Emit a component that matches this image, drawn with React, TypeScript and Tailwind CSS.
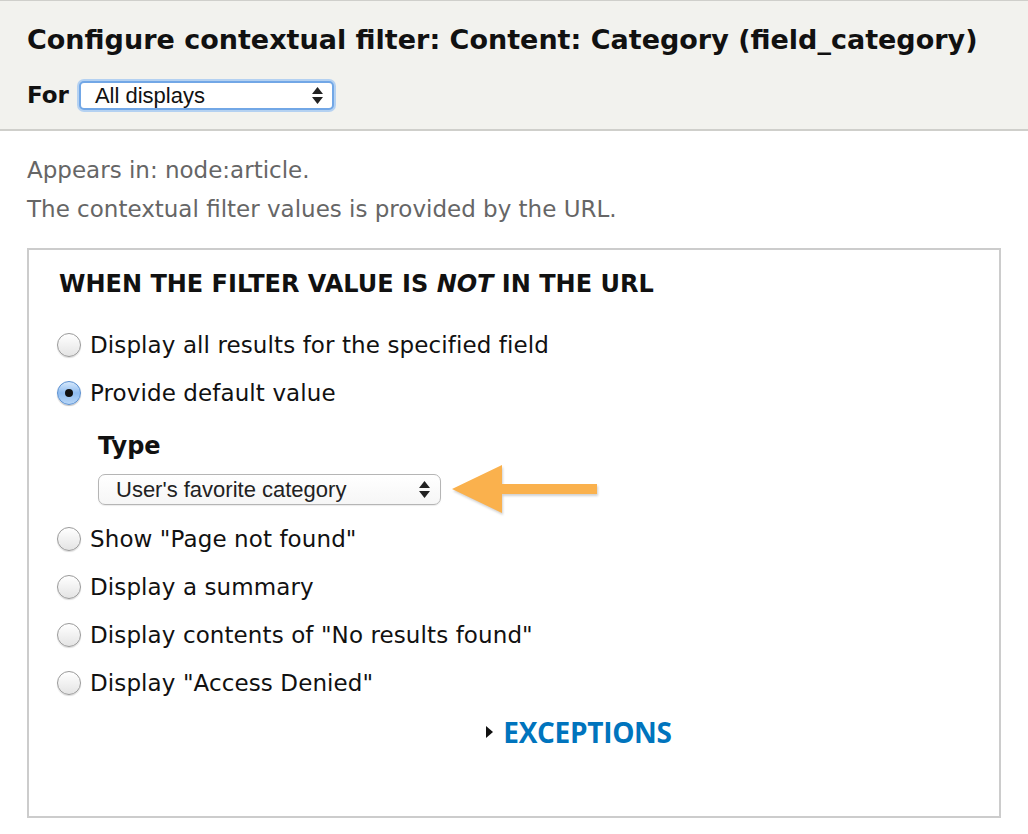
import React from "react";

const Radio = ({ checked = false }: { checked?: boolean }) => (
  <span
    className={
      checked
        ? "flex h-[24px] w-[24px] shrink-0 items-center justify-center rounded-full border border-[#5a8fd0] bg-gradient-to-b from-[#d6e8fb] via-[#8fbcf0] to-[#b7d6f7] shadow-[0_1px_1px_rgba(0,0,0,0.25)]"
        : "flex h-[24px] w-[24px] shrink-0 items-center justify-center rounded-full border border-[#9a9a9a] bg-gradient-to-b from-[#ffffff] to-[#e4e4e4] shadow-[0_1px_1px_rgba(0,0,0,0.15)]"
    }
  >
    {checked && <span className="h-[8px] w-[8px] rounded-full bg-[#111]" />}
  </span>
);

const UpDown = () => (
  <svg width="11" height="17" viewBox="0 0 11 17" className="shrink-0">
    <path d="M5.5 0 L11 7 L0 7 Z" fill="#222" />
    <path d="M0 10 L11 10 L5.5 17 Z" fill="#222" />
  </svg>
);

const options = [
  "Display all results for the specified field",
  "Provide default value",
  'Show "Page not found"',
  "Display a summary",
  'Display contents of "No results found"',
  'Display "Access Denied"',
];

export default function App() {
  return (
    <div
      className="min-h-[834px] w-[1028px] bg-white text-[#222]"
      style={{ fontFamily: '"DejaVu Sans", "Liberation Sans", sans-serif' }}
    >
      {/* Header */}
      <div className="border-t border-b-2 border-[#cfcfcb] bg-[#f2f2ee] px-[27px] pt-[22px] pb-[17px]">
        <h1 className="text-[27px] font-bold leading-[34px] text-[#111]">
          Configure contextual filter: Content: Category (field_category)
        </h1>
        <div className="mt-[22px] flex items-center gap-[8px]">
          <span className="text-[23px] font-bold leading-[33px] text-[#111]">For</span>
          <div className="rounded-[7px] bg-[#b4d1f1] p-[2px]">
            <div className="flex h-[29px] w-[255px] items-center justify-between rounded-[5px] border-2 border-[#72a7e6] bg-white pl-[14px] pr-[9px]">
              <span
                className="text-[22px] leading-[25px] text-[#111]"
                style={{ fontFamily: '"Liberation Sans", Arial, sans-serif' }}
              >
                All displays
              </span>
              <UpDown />
            </div>
          </div>
        </div>
      </div>

      {/* Description */}
      <div className="px-[27px] pt-[20px] text-[23px] leading-[39px] text-[#666]">
        <p>Appears in: node:article.</p>
        <p>The contextual filter values is provided by the URL.</p>
      </div>

      {/* Fieldset */}
      <div className="mx-[27px] mt-[19px] h-[570px] border-2 border-[#cccccc] px-[30px] pt-[19px]">
        <h2 className="text-[24px] font-bold leading-[30px] text-[#111]">
          WHEN THE FILTER VALUE IS <em>NOT</em> IN THE URL
        </h2>

        <div className="mt-[22px] flex flex-col">
          {options.map((label, i) => (
            <React.Fragment key={label}>
              <div className="-ml-[2px] flex h-[48px] items-center gap-[9px]">
                <Radio checked={i === 1} />
                <span className="text-[23px] tracking-[0.1px] text-[#111]">{label}</span>
              </div>
              {i === 1 && (
                <div className="pl-[39px] pt-[11px] pb-[10px]">
                  <div className="text-[24px] font-bold leading-[36px] text-[#111]">Type</div>
                  <div className="mt-[10px] flex h-[31px] items-center gap-[11px]">
                    <div className="flex h-[31px] w-[343px] shrink-0 items-center justify-between rounded-[7px] border border-[#b5b5b5] bg-gradient-to-b from-white to-[#f6f6f6] pl-[17px] pr-[10px] shadow-[0_1px_1px_rgba(0,0,0,0.08)]">
                      <span
                        className="text-[22px] leading-[25px] text-[#222]"
                        style={{ fontFamily: '"Liberation Sans", Arial, sans-serif' }}
                      >
                        User's favorite category
                      </span>
                      <UpDown />
                    </div>
                    {/* annotation arrow */}
                    <svg
                      width="146"
                      height="52"
                      viewBox="0 0 146 52"
                      className="shrink-0 drop-shadow-[1px_2px_1px_rgba(0,0,0,0.18)]"
                    >
                      <path d="M0 25 L50 1 L50 20 L145 20 L145 30 L50 30 L50 49 Z" fill="#fab14d" />
                    </svg>
                  </div>
                </div>
              )}
            </React.Fragment>
          ))}
        </div>

        <div className="mt-[10px] flex items-center justify-center gap-[10px] pl-[130px]">
          <svg width="7" height="12" viewBox="0 0 7 12">
            <path d="M0 0 L7 6 L0 12 Z" fill="#111" />
          </svg>
          <span
            className="text-[28px] font-bold leading-[30px] tracking-[-0.3px] text-[#0074bd]"
            style={{ fontFamily: '"Open Sans", "Noto Sans", sans-serif' }}
          >
            EXCEPTIONS
          </span>
        </div>
      </div>
    </div>
  );
}
